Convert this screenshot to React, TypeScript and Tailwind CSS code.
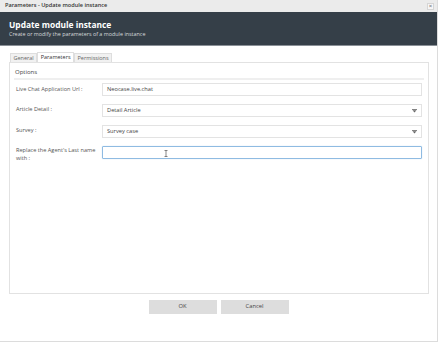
import React from "react";

const font = { fontFamily: '"Open Sans", "Liberation Sans", sans-serif' };

function Caret() {
  return (
    <svg width="5" height="4" viewBox="0 0 5 4" className="absolute right-[4px] top-1/2 -translate-y-1/2">
      <rect x="0" y="0" width="5" height="0.8" fill="#666" />
      <path d="M0.5 1.3 L4.5 1.3 L2.5 3.5 Z" fill="#666" />
    </svg>
  );
}

export default function App() {
  return (
    <div className="w-[439px] h-[343px] bg-white overflow-hidden" style={font}>
      <div className="w-[438px] h-[342px] border-r border-b border-[#dcdcdc] flex flex-col">
        {/* Title bar */}
        <div className="h-[12px] bg-[#ebebeb] flex items-center justify-between pl-[5px] pr-[3px]">
          <span className="text-[5.6px] font-semibold text-[#333] leading-none">Parameters - Update module instance</span>
          <div className="w-[7px] h-[7px] bg-[#f6f6f6] border border-[#d5d5d5] flex items-center justify-center text-[6px] leading-none text-[#555]">×</div>
        </div>
        {/* Dark header */}
        <div className="h-[34px] bg-[#353f48] border-b border-[#8a9097] pl-[9px] flex flex-col justify-center">
          <div className="text-[8.4px] font-bold text-white leading-[11px]">Update module instance</div>
          <div className="text-[5.4px] text-[#d6dadd] leading-[8px]">Create or modify the parameters of a module instance</div>
        </div>
        {/* Content */}
        <div className="flex-1 flex flex-col pt-[6px] pl-[9px] pr-[8px]">
          <div className="flex pl-[1px] h-[10px] items-end">
            <div className="h-[9px] px-[2.5px] bg-[#f1f1f1] border border-b-0 border-[#dedede] text-[5.5px] text-[#666] leading-[8px]">General</div>
            <div className="h-[10px] px-[2.5px] bg-white border border-b-0 border-[#dedede] text-[5.5px] text-[#333] leading-[9px]">Parameters</div>
            <div className="h-[9px] px-[2.5px] bg-[#f1f1f1] border border-b-0 border-[#dedede] text-[5.5px] text-[#666] leading-[8px]">Permissions</div>
          </div>
          <div className="h-[232px] border border-[#e2e2e2] px-[4px] pt-[5px]">
            <div className="text-[6px] text-[#444] leading-[8px] pl-[1px] pb-[2px] border-b-2 border-[#efefef]">Options</div>
            <div className="flex flex-col gap-[8px] pt-[3px] pr-[2px]">
              <div className="flex items-center">
                <div className="w-[88px] pl-[2px] text-[5.6px] text-[#555] leading-[8px] -mt-[2px]">Live Chat Application Url :</div>
                <div className="flex-1 h-[13px] border border-[#e3e3e3] flex items-center pl-[4px] text-[5.7px] text-[#444]">Neocase.live.chat</div>
              </div>
              <div className="flex items-center">
                <div className="w-[88px] pl-[2px] text-[5.6px] text-[#555] leading-[8px] -mt-[4px]">Article Detail :</div>
                <div className="relative flex-1 h-[13px] border border-[#e3e3e3] flex items-center pl-[4px] text-[5.7px] text-[#444]">
                  Detail Article
                  <Caret />
                </div>
              </div>
              <div className="flex items-center">
                <div className="w-[88px] pl-[2px] text-[5.6px] text-[#555] leading-[8px] -mt-[4px]">Survey :</div>
                <div className="relative flex-1 h-[13px] border border-[#e3e3e3] flex items-center pl-[4px] text-[5.7px] text-[#444]">
                  Survey case
                  <Caret />
                </div>
              </div>
              <div className="flex items-start">
                <div className="w-[88px] pl-[2px] text-[5.6px] text-[#555] leading-[8px]">Replace the Agent's Last name<br />with :</div>
                <div className="relative flex-1 h-[13px] border border-[#8fbbe2] rounded-[1px] shadow-[0_0_1px_#a9cdec]">
                  <svg width="4" height="7" viewBox="0 0 4 7" className="absolute left-[61px] top-[3px]">
                    <path d="M0.5 0.5 H3.5 M2 0.5 V6.5 M0.5 6.5 H3.5" stroke="#555" strokeWidth="0.7" fill="none" />
                  </svg>
                </div>
              </div>
            </div>
          </div>
          <div className="flex justify-center gap-[4px] pt-[6px] pr-[1px]">
            <button className="w-[68px] h-[14px] bg-[#dddddd] text-[5.8px] text-[#444] leading-none">OK</button>
            <button className="w-[68px] h-[14px] bg-[#dddddd] text-[5.8px] text-[#444] leading-none">Cancel</button>
          </div>
        </div>
      </div>
    </div>
  );
}
